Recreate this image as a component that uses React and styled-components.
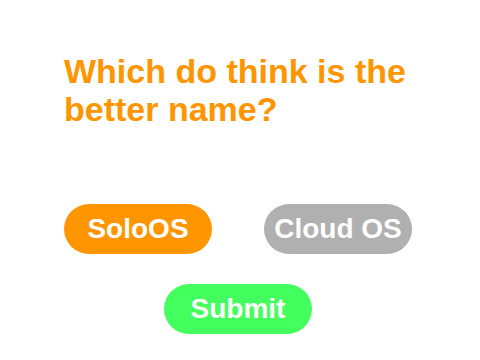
import React from "react";
import styled, { createGlobalStyle } from "styled-components";

const Global = createGlobalStyle`
  html, body { margin: 0; padding: 0; background: #ffffff; }
  body { font-family: "Liberation Sans", Arial, sans-serif; }
`;

const Page = styled.div`
  width: 480px;
  height: 360px;
  box-sizing: border-box;
  padding: 52px 0 0 64px;
  display: flex;
  flex-direction: column;
`;

const Question = styled.h1`
  margin: 0;
  width: 380px;
  font-size: 34px;
  line-height: 38px;
  font-weight: 700;
  color: #ff9500;
`;

const Options = styled.div`
  margin-top: 76px;
  width: 348px;
  display: flex;
  justify-content: space-between;
`;

const Pill = styled.button`
  width: 148px;
  height: 50px;
  border: none;
  border-radius: 25px;
  padding: 0;
  background: ${(p) => p.$bg};
  color: #ffffff;
  font-family: "Liberation Sans", Arial, sans-serif;
  font-size: 28px;
  font-weight: 700;
  display: flex;
  align-items: center;
  justify-content: center;
  cursor: pointer;
`;

const SubmitRow = styled.div`
  margin-top: 30px;
  width: 348px;
  display: flex;
  justify-content: center;
`;

export default function App() {
  return (
    <>
      <Global />
      <Page>
        <Question>Which do think is the better name?</Question>
        <Options>
          <Pill $bg="#ff9500">SoloOS</Pill>
          <Pill $bg="#b0b0b0">Cloud OS</Pill>
        </Options>
        <SubmitRow>
          <Pill $bg="#42ff5d">Submit</Pill>
        </SubmitRow>
      </Page>
    </>
  );
}
